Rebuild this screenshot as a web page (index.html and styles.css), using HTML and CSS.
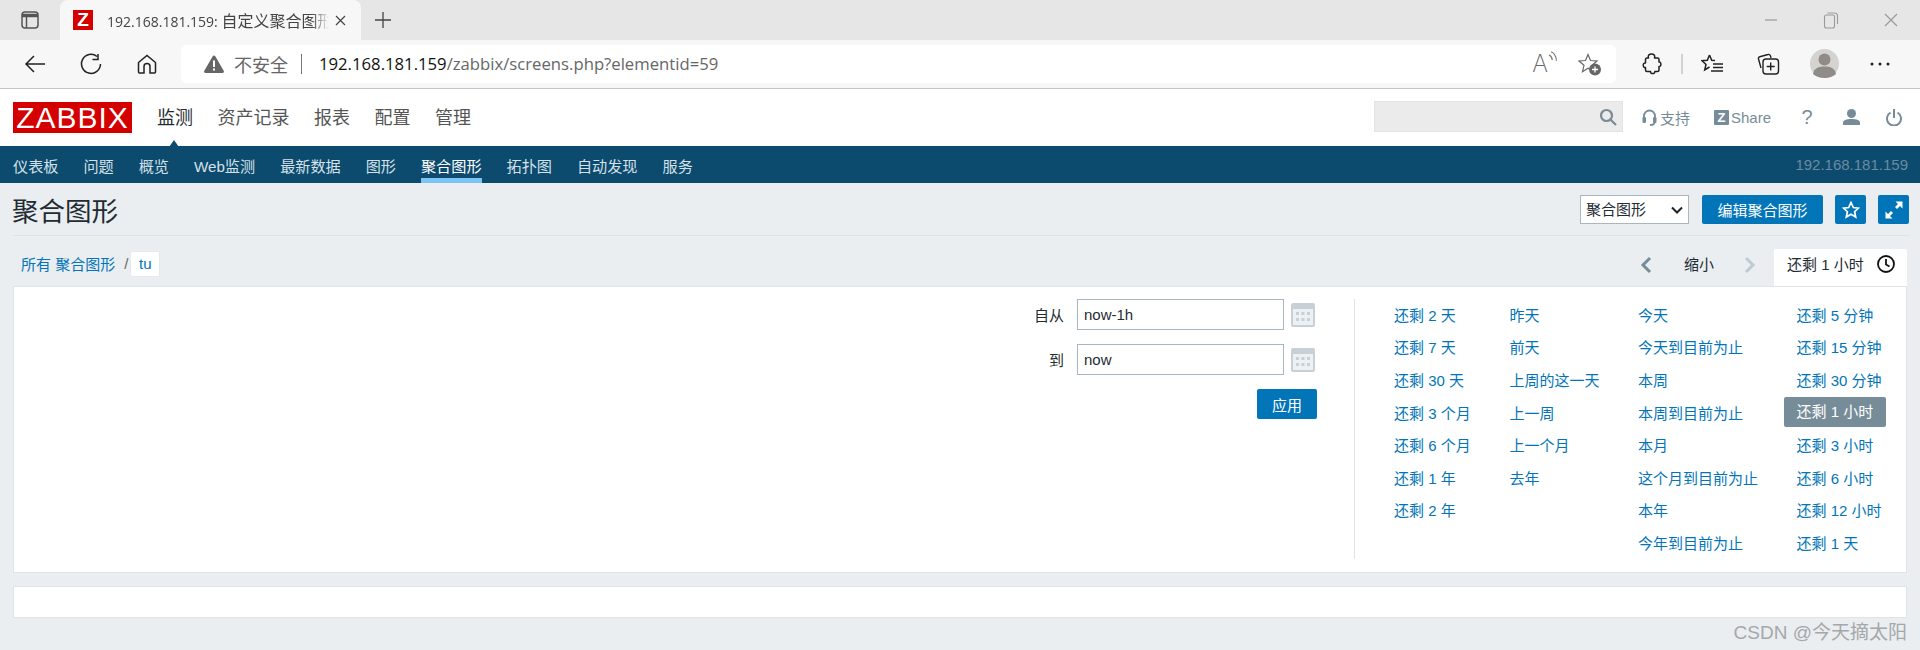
FILE: index.html
```html
<!DOCTYPE html>
<html lang="zh-CN">
<head>
    <meta charset="UTF-8">
    <title>192.168.181.159: 自定义聚合图形</title>
    <link rel="stylesheet" href="styles.css">
</head>
<body>

<div class="tab-strip">
    <span class="strip-icon">
        <svg width="18" height="18" viewBox="0 0 18 18" fill="none" stroke="#555" stroke-width="1.5"><rect x="1" y="1" width="16" height="16" rx="3"/><path d="M1 4.5h16" stroke-width="3.5"/><path d="M5.5 5v12"/></svg>
    </span>
    <div class="tab">
        <span class="favicon">Z</span>
        <span class="tab-title">192.168.181.159: <span class="tab-cjk">自定义聚合图形</span></span>
        <svg class="tab-close" width="11" height="11" viewBox="0 0 11 11" stroke="#444" stroke-width="1.2"><path d="M1 1l9 9M10 1l-9 9"/></svg>
    </div>
    <svg class="new-tab" width="18" height="18" viewBox="0 0 18 18" stroke="#444" stroke-width="1.3"><path d="M9 1v16M1 9h16"/></svg>
    <div class="window-btns">
        <svg width="14" height="14" viewBox="0 0 14 14" stroke="#999" stroke-width="1.2"><path d="M1 7h12"/></svg>
        <svg width="16" height="18" viewBox="0 0 16 18" fill="none" stroke="#999" stroke-width="1.1"><rect x="1.5" y="4" width="10" height="13" rx="2"/><path d="M4.5 2h7a3 3 0 0 1 3 3v8"/></svg>
        <svg width="14" height="14" viewBox="0 0 14 14" stroke="#999" stroke-width="1.1"><path d="M1 1l12 12M13 1L1 13"/></svg>
    </div>
</div>

<div class="toolbar">
    <span class="tool-slot first">
        <svg width="22" height="20" viewBox="0 0 22 20" fill="none" stroke="#222" stroke-width="1.5"><path d="M21 10H2M10 2l-8 8 8 8"/></svg>
    </span>
    <span class="tool-slot">
        <svg width="22" height="22" viewBox="0 0 22 22" fill="none" stroke="#222" stroke-width="1.5"><path d="M17 3.5A9.5 9.5 0 1 0 20.5 11"/><path d="M12.5 6.5h5.5V1"/></svg>
    </span>
    <span class="tool-slot">
        <svg width="20" height="20" viewBox="0 0 20 20" fill="none" stroke="#222" stroke-width="1.5"><path d="M1.5 8.5L10 1.5l8.500 7V18a1 1 0 0 1-1 1H13v-6.500a3 3 0 0 0-6 0V19H2.500a1 1 0 0 1-1-1z"/></svg>
    </span>
    <div class="address">
        <svg class="warn" width="20" height="18" viewBox="0 0 20 18"><path d="M10 0.500a1.500 1.500 0 0 1 1.300.8l8.400 14.500a1.400 1.400 0 0 1-1.200 2.200h-17a1.400 1.400 0 0 1-1.200-2.200L8.700 1.300A1.500 1.500 0 0 1 10 .5z" fill="#666"/><path d="M10 5.500v6.500M10 13.500v2" stroke="#fff" stroke-width="2"/></svg>
        <span class="not-secure">不安全</span>
        <span class="addr-sep"></span>
        <span class="url"><b>192.168.181.159</b>/zabbix/screens.php?elementid=59</span>
        <span class="read-aloud">
            <span class="read-a">A</span>
            <svg width="10" height="12" viewBox="0 0 10 12" fill="none" stroke="#777" stroke-width="1.200"><path d="M1 4c2 .8 3 2.500 3.300 5M3 .8c3 1 5 4.500 5.500 9"/></svg>
        </span>
        <svg class="star-add" width="24" height="24" viewBox="0 0 24 24"><path d="M10 2.500l2.500 6 6.500.5-5 4.300 1.500 6.400L10 16.300 4.500 19.700 6 13.300 1 9l6.500-.5z" fill="none" stroke="#666" stroke-width="1.200"/><circle cx="17" cy="17.500" r="6" fill="#666"/><path d="M17 14.500v6M14 17.500h6" stroke="#fff" stroke-width="1.300"/></svg>
    </div>
    <span class="tool-slot ext">
        <svg width="20" height="22" viewBox="0 0 20 22" fill="none" stroke="#222" stroke-width="1.500" stroke-linejoin="round"><path d="M6.500 5C5.500 2 7.500 1 9.500 1s4 1 3 4h3a1.500 1.500 0 0 1 1.500 1.500V9c2.500-.5 2.500 5 0 4.500V17a1.500 1.500 0 0 1-1.500 1.500h-2.700c.5 2.800-4.800 2.800-4.300 0H5A1.500 1.500 0 0 1 3.500 17v-2.500c-3 .5-3-5 0-4.500V6.500A1.500 1.500 0 0 1 5 5z"/></svg>
    </span>
    <span class="tool-sep"></span>
    <span class="tool-slot">
        <svg width="23" height="22" viewBox="0 0 23 22" fill="none" stroke="#222" stroke-width="1.500"><path d="M8.500 2l2.200 5.200 3.300.3M8.500 2L6.300 7.200 1 7.700l4 3.700-1.300 5.600 4.800-3"/><path d="M12 11h10M12 14.500h10M10 18h12" stroke-width="1.300"/></svg>
    </span>
    <span class="tool-slot">
        <svg width="23" height="22" viewBox="0 0 23 22" fill="none" stroke="#222" stroke-width="1.400"><path d="M4 15L1.500 6c-.3-1 .2-2 1.300-2.300L11 1.500c1-.3 2 .3 2.500 1.500L14 5"/><rect x="6" y="6" width="15.500" height="15" rx="3" fill="#f7f7f7"/><path d="M13.700 9.500v8M9.700 13.500h8"/></svg>
    </span>
    <span class="tool-slot">
        <svg width="29" height="29" viewBox="0 0 29 29"><circle cx="14.500" cy="14.500" r="14.500" fill="#d5d3cf"/><circle cx="14.500" cy="10.500" r="6" fill="#8f8b86"/><path d="M3 25c1-6 6-7.500 11.500-7.500S25 19 26 25c-3 2.700-7 4-11.500 4S6 27.700 3 25z" fill="#8f8b86"/></svg>
    </span>
    <span class="tool-slot">
        <svg width="22" height="4" viewBox="0 0 22 4" fill="#222"><circle cx="3" cy="2" r="1.500"/><circle cx="11" cy="2" r="1.500"/><circle cx="19" cy="2" r="1.500"/></svg>
    </span>
</div>

<header class="top-nav">
    <a class="logo">ZABBIX</a>
    <nav class="main-menu">
        <a class="selected">监测</a>
        <a>资产记录</a>
        <a>报表</a>
        <a>配置</a>
        <a>管理</a>
    </nav>
    <div class="search-box">
        <svg width="18" height="18" viewBox="0 0 18 18" fill="none" stroke="#7b8a94" stroke-width="2.200"><circle cx="7.500" cy="7.500" r="5.500"/><path d="M11.500 11.500l5.500 5.500"/></svg>
    </div>
    <div class="user-links">
        <a class="support">
            <svg width="15" height="17" viewBox="0 0 15 17" fill="none" stroke="#768d99" stroke-width="1.800"><path d="M2 10V7a5.500 5.500 0 0 1 11 0v3"/><path d="M12.500 13c0 2-2 3-4.500 3"/><rect x=".5" y="8" width="3.500" height="6" rx="1.200" fill="#768d99" stroke="none"/><rect x="11" y="8" width="3.500" height="6" rx="1.200" fill="#768d99" stroke="none"/></svg>
            支持
        </a>
        <a class="share"><span class="share-z">Z</span>Share</a>
        <a class="help">?</a>
        <svg class="user" width="17" height="16" viewBox="0 0 17 16" fill="#768d99"><circle cx="8.500" cy="4.500" r="4.500"/><path d="M0 16v-2c0-3 3-4 8.500-4s8.500 1 8.500 4v2z"/></svg>
        <svg class="power" width="16" height="17" viewBox="0 0 16 17" fill="none" stroke="#768d99" stroke-width="2"><path d="M8 0v9"/><path d="M4.500 3.500a7 7 0 1 0 7 0"/></svg>
    </div>
</header>

<nav class="sub-nav">
    <a>仪表板</a>
    <a>问题</a>
    <a>概览</a>
    <a>Web监测</a>
    <a>最新数据</a>
    <a>图形</a>
    <a class="active">聚合图形</a>
    <a>拓扑图</a>
    <a>自动发现</a>
    <a>服务</a>
    <span class="server-name">192.168.181.159</span>
</nav>

<main class="page">
    <div class="title-row">
        <h1>聚合图形</h1>
        <div class="select-wrap">
            <select class="screen-select">
                <option>聚合图形</option>
            </select>
            <svg width="12" height="8" viewBox="0 0 12 8" fill="none" stroke="#222" stroke-width="2"><path d="M1 1.500l5 5 5-5"/></svg>
        </div>
        <button class="btn edit-btn">编辑聚合图形</button>
        <button class="btn icon-btn">
            <svg width="18" height="18" viewBox="0 0 18 18" fill="none" stroke="#fff" stroke-width="1.700"><path d="M9 1.500l2.300 5 5.200.6-3.900 3.600 1.100 5.300L9 13.300 4.300 16l1.100-5.300L1.500 7.100l5.200-.6z"/></svg>
        </button>
        <button class="btn icon-btn">
            <svg width="20" height="20" viewBox="0 0 20 20" fill="#fff"><path d="M11.500 1.500h7v7l-2.500-2.500-3 3-2-2 3-3zM8.500 18.500h-7v-7l2.500 2.500 3-3 2 2-3 3z"/></svg>
        </button>
    </div>

    <div class="filter-bar">
        <div class="breadcrumb">
            <a>所有 聚合图形</a>
            <span class="slash">/</span>
            <a class="crumb-current">tu</a>
        </div>
        <div class="time-nav">
            <svg class="arrow-l" width="12" height="18" viewBox="0 0 12 18" fill="none" stroke="#768d99" stroke-width="3"><path d="M10 2L3 9l7 7"/></svg>
            <span class="zoom-out">缩小</span>
            <svg class="arrow-r" width="12" height="18" viewBox="0 0 12 18" fill="none" stroke="#bfcbd2" stroke-width="3"><path d="M2 2l7 7-7 7"/></svg>
            <div class="time-tab">
                还剩 1 小时
                <svg width="18" height="18" viewBox="0 0 18 18" fill="none" stroke="#111" stroke-width="1.800"><circle cx="9" cy="9" r="8"/><path d="M9 4v5.500l3.500 2"/></svg>
            </div>
        </div>
    </div>

    <section class="panel time-panel">
        <div class="range-form">
            <label>自从</label>
            <input type="text" value="now-1h">
            <svg class="cal" width="24" height="24" viewBox="0 0 24 24"><rect width="24" height="24" rx="2" fill="#c6d0d6"/><rect x="2" y="6" width="20" height="16" fill="#eef1f3"/><g fill="#c6d0d6"><rect x="5" y="9" width="3" height="3"/><rect x="10.500" y="9" width="3" height="3"/><rect x="16" y="9" width="3" height="3"/><rect x="5" y="15" width="3" height="3"/><rect x="10.500" y="15" width="3" height="3"/><rect x="16" y="15" width="3" height="3"/></g></svg>
            <label>到</label>
            <input type="text" value="now">
            <svg class="cal" width="24" height="24" viewBox="0 0 24 24"><rect width="24" height="24" rx="2" fill="#c6d0d6"/><rect x="2" y="6" width="20" height="16" fill="#eef1f3"/><g fill="#c6d0d6"><rect x="5" y="9" width="3" height="3"/><rect x="10.500" y="9" width="3" height="3"/><rect x="16" y="9" width="3" height="3"/><rect x="5" y="15" width="3" height="3"/><rect x="10.500" y="15" width="3" height="3"/><rect x="16" y="15" width="3" height="3"/></g></svg>
            <button class="btn apply-btn">应用</button>
        </div>
        <div class="quick-ranges">
            <ul class="col-1">
                <li><a>还剩 2 天</a></li>
                <li><a>还剩 7 天</a></li>
                <li><a>还剩 30 天</a></li>
                <li><a>还剩 3 个月</a></li>
                <li><a>还剩 6 个月</a></li>
                <li><a>还剩 1 年</a></li>
                <li><a>还剩 2 年</a></li>
            </ul>
            <ul class="col-2">
                <li><a>昨天</a></li>
                <li><a>前天</a></li>
                <li><a>上周的这一天</a></li>
                <li><a>上一周</a></li>
                <li><a>上一个月</a></li>
                <li><a>去年</a></li>
            </ul>
            <ul class="col-3">
                <li><a>今天</a></li>
                <li><a>今天到目前为止</a></li>
                <li><a>本周</a></li>
                <li><a>本周到目前为止</a></li>
                <li><a>本月</a></li>
                <li><a>这个月到目前为止</a></li>
                <li><a>本年</a></li>
                <li><a>今年到目前为止</a></li>
            </ul>
            <ul class="col-4">
                <li><a>还剩 5 分钟</a></li>
                <li><a>还剩 15 分钟</a></li>
                <li><a>还剩 30 分钟</a></li>
                <li><a class="current">还剩 1 小时</a></li>
                <li><a>还剩 3 小时</a></li>
                <li><a>还剩 6 小时</a></li>
                <li><a>还剩 12 小时</a></li>
                <li><a>还剩 1 天</a></li>
            </ul>
        </div>
    </section>

    <section class="panel empty-panel"></section>
    <div class="watermark">CSDN @今天摘太阳</div>
</main>

</body>
</html>
```

FILE: styles.css
```css
* {
    box-sizing: border-box;
}

html, body {
    height: 650px;
    overflow: hidden;
}

body {
    margin: 0;
    font-family: "Liberation Sans", "Noto Sans CJK SC", sans-serif;
    font-size: 15px;
    color: #1f2c33;
    background-color: #ebeef0;
}

a {
    text-decoration: none;
}

ul {
    list-style: none;
    margin: 0;
    padding: 0;
}

svg {
    display: block;
    flex: none;
}

/* browser chrome */
.tab-strip {
    display: flex;
    align-items: center;
    height: 40px;
    background-color: #e6e6e6;
    font-family: "Open Sans", "Noto Sans CJK SC", sans-serif;
}

.strip-icon {
    display: flex;
    justify-content: center;
    width: 60px;
}

.tab {
    display: flex;
    align-items: center;
    width: 301px;
    height: 40px;
    padding-left: 13px;
    background-color: #f7f7f7;
    border-radius: 8px 8px 0 0;
}

.favicon {
    width: 20px;
    height: 20px;
    flex: none;
    background-color: #d40000;
    color: #fff;
    font: bold 19px/20px "Liberation Sans", sans-serif;
    text-align: center;
}

.tab-title {
    width: 222px;
    margin-left: 14px;
    overflow: hidden;
    white-space: nowrap;
    font-size: 14px;
    color: #444;
    -webkit-mask-image: linear-gradient(to right, #000 92%, transparent);
    mask-image: linear-gradient(to right, #000 92%, transparent);
}

.tab-cjk {
    font-size: 16px;
}

.tab-close {
    margin-left: 6px;
}

.new-tab {
    margin-left: 13px;
}

.window-btns {
    display: flex;
    align-items: center;
    gap: 45px;
    margin-left: auto;
    padding-right: 22px;
}

.toolbar {
    display: flex;
    align-items: center;
    height: 49px;
    padding-bottom: 1px;
    background-color: #f7f7f7;
    border-bottom: 1px solid #c4c4c4;
}

.tool-slot {
    display: flex;
    justify-content: center;
    width: 56px;
}

.tool-slot.first {
    margin-left: 7px;
}

.tool-slot.ext {
    margin-left: 8px;
}

.tool-sep {
    width: 2px;
    height: 20px;
    margin: 0 1px;
    background-color: #d2d2d2;
}

.address {
    display: flex;
    align-items: center;
    width: 1435px;
    height: 38px;
    margin-left: 6px;
    padding-left: 23px;
    background-color: #fff;
    border-radius: 6px;
    font-family: "Open Sans", "Noto Sans CJK SC", sans-serif;
    color: #666;
}

.not-secure {
    margin-left: 10px;
    font-size: 18px;
}

.addr-sep {
    width: 1px;
    height: 20px;
    margin: 0 17px 0 13px;
    background-color: #777;
}

.url {
    font-size: 16.700px;
}

.url b {
    font-weight: normal;
    color: #111;
}

.read-aloud {
    display: flex;
    align-items: flex-start;
    margin-left: auto;
}

.read-a {
    font-family: "Inter", sans-serif;
    font-size: 24px;
    font-weight: 200;
    line-height: 26px;
    color: #666;
}

.star-add {
    margin: 0 14px 0 20px;
}

/* zabbix header */
.top-nav {
    display: flex;
    align-items: center;
    height: 57px;
    padding: 0 18px 0 13px;
    background-color: #fff;
}

.logo {
    width: 119px;
    height: 31px;
    background-color: #d40000;
    color: #fff;
    font-size: 30px;
    line-height: 31px;
    text-align: center;
    letter-spacing: 1px;
}

.main-menu {
    display: flex;
    gap: 24.500px;
    margin-left: 25px;
    margin-bottom: 3px;
    font-size: 18px;
}

.main-menu a {
    color: #555;
}

.main-menu .selected {
    position: relative;
    color: #1f2c33;
}

.main-menu .selected::after {
    content: "";
    position: absolute;
    left: 10px;
    bottom: -21px;
    border: 7px solid transparent;
    border-top: 0;
    border-bottom: 10px solid #0c4a6e;
}

.search-box {
    display: flex;
    align-items: center;
    justify-content: flex-end;
    width: 249px;
    height: 31px;
    margin-left: auto;
    margin-bottom: 2px;
    padding-right: 5px;
    background-color: #ebebeb;
    border: 1px solid #e3e3e3;
}

.user-links {
    display: flex;
    align-items: center;
    margin-left: 19px;
    margin-bottom: 1px;
    color: #768d99;
    font-size: 15px;
}

.support {
    display: flex;
    align-items: center;
    gap: 3px;
    color: #768d99;
}

.share {
    display: flex;
    align-items: center;
    gap: 2px;
    margin-left: 24px;
    color: #768d99;
}

.share-z {
    width: 15px;
    height: 15px;
    background-color: #768d99;
    border-radius: 1px;
    color: #fff;
    font-weight: bold;
    font-size: 13px;
    line-height: 15px;
    text-align: center;
}

.help {
    width: 12px;
    margin-left: 30px;
    color: #768d99;
    font-size: 20px;
    line-height: 20px;
    text-align: center;
}

.user {
    margin-left: 30px;
}

.power {
    margin-left: 26px;
}

.sub-nav {
    display: flex;
    align-items: center;
    gap: 25px;
    height: 37px;
    padding: 0 12px 0 13px;
    background-color: #0c4a6e;
    font-size: 15.150px;
}

.sub-nav a {
    display: flex;
    align-items: center;
    height: 37px;
    padding-top: 1px;
    color: #d4e1e8;
}

.sub-nav .active {
    color: #fff;
    border-bottom: 5px solid #7ac5f5;
    padding-top: 6px;
}

.server-name {
    margin-left: auto;
    color: #6a8ba0;
    font-size: 15px;
}

/* page */
.page {
    padding: 0 12px 0 13px;
}

.title-row {
    display: flex;
    align-items: center;
    height: 53px;
    margin-right: -1px;
    padding-top: 1px;
    border-bottom: 1px solid #dde2e6;
}

.title-row h1 {
    margin: 0 auto 0 -1px;
    font-size: 26.500px;
    font-weight: normal;
    color: #1f2c33;
}

.select-wrap {
    position: relative;
}

.select-wrap svg {
    position: absolute;
    top: 11px;
    right: 6px;
    pointer-events: none;
}

.screen-select {
    display: block;
    width: 109px;
    height: 29px;
    padding: 0 0 0 5px;
    appearance: none;
    background-color: #fff;
    border: 1px solid #a9b6bf;
    border-radius: 0;
    color: #1f2c33;
    font: 15px "Liberation Sans", "Noto Sans CJK SC", sans-serif;
}

.btn {
    height: 29px;
    padding: 0;
    border: none;
    border-radius: 2px;
    background-color: #0275b8;
    color: #fff;
    font: 15px "Liberation Sans", "Noto Sans CJK SC", sans-serif;
}

.edit-btn {
    width: 121px;
    margin-left: 13px;
}

.icon-btn {
    display: flex;
    align-items: center;
    justify-content: center;
    width: 31px;
    margin-left: 12px;
}

.filter-bar {
    display: flex;
    justify-content: space-between;
    height: 50px;
    padding-top: 14px;
    margin-right: 1px;
}

.breadcrumb {
    display: flex;
    align-items: center;
    height: 27px;
    padding-left: 8px;
}

.breadcrumb a {
    color: #0275b8;
}

.slash {
    margin: 0 2px 0 9px;
    color: #666;
}

.crumb-current {
    display: flex;
    align-items: center;
    justify-content: center;
    width: 30px;
    height: 26px;
    background-color: #fff;
    border: 1px solid #e6e9eb;
    border-radius: 2px;
}

.time-nav {
    display: flex;
    align-items: flex-start;
}

.arrow-l,
.arrow-r {
    margin-top: 6px;
}

.zoom-out {
    margin: 6px 30px 0 32px;
    line-height: 18px;
}

.time-tab {
    display: flex;
    align-items: center;
    gap: 13px;
    width: 133px;
    height: 37px;
    margin: -1px 0 0 18px;
    padding: 0 0 8px 13px;
    background-color: #fff;
    border-radius: 2px 2px 0 0;
    color: #1f2c33;
    position: relative;
    z-index: 1;
}

.panel {
    margin-right: 1px;
    background-color: #fff;
    border: 1px solid #dfe4e7;
}

.time-panel {
    display: flex;
    height: 287px;
    padding: 12px 0 13px;
}

.range-form {
    display: grid;
    grid-template-columns: 52px 207px 24px;
    grid-auto-rows: 31px;
    column-gap: 13px;
    row-gap: 14px;
    align-items: center;
    flex: 1;
    justify-content: end;
    align-content: start;
    padding-right: 33px;
}

.range-form label {
    text-align: right;
}

.range-form input {
    width: 207px;
    height: 30.500px;
    padding: 0 6px;
    background-color: #fff;
    border: 1px solid #a9b6bf;
    color: #1f2c33;
    font: 15px "Liberation Sans", "Noto Sans CJK SC", sans-serif;
}

.cal {
    margin-left: -6px;
}

.apply-btn {
    grid-column: 2 / 4;
    justify-self: end;
    width: 60px;
    height: 30px;
    margin-top: -1px;
    margin-right: 4px;
}

.quick-ranges {
    display: flex;
    flex: none;
    width: 552px;
    border-left: 1px solid #dfe4e7;
    padding-left: 39px;
}

.quick-ranges ul {
    margin-top: -1px;
}

.quick-ranges li {
    display: flex;
    align-items: center;
    height: 32.600px;
}

.quick-ranges a {
    color: #0275b8;
    white-space: nowrap;
}

.col-1 {
    width: 115.500px;
}

.col-2 {
    width: 128.500px;
}

.col-3 {
    width: 158.500px;
}

.quick-ranges .current {
    width: 102px;
    height: 30px;
    margin-left: -13px;
    padding-left: 13px;
    background-color: #768d99;
    border-radius: 2px;
    color: #fff;
    line-height: 30px;
}

.empty-panel {
    height: 32px;
    margin-top: 13px;
}

.watermark {
    margin-top: 3px;
    margin-right: 1px;
    color: #a5a8aa;
    font-size: 19px;
    line-height: 24px;
    text-align: right;
}
```
